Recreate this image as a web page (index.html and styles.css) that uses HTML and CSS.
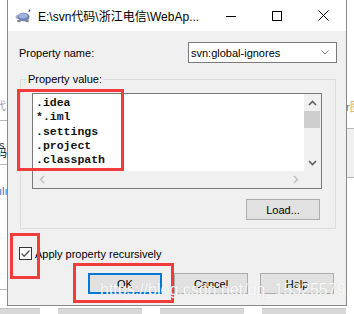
FILE: index.html
```html
<!DOCTYPE html>
<html lang="en">
<head>
    <meta charset="UTF-8">
    <title>Properties</title>
    <link rel="stylesheet" href="styles.css">
</head>
<body>
    <div class="screen">
        <div class="stage">
            <!-- window behind, left edge -->
            <div class="side side-left">
                <div class="gap-100"></div>
                <div class="frag frag-gray">代</div>
                <div class="rule rule-a"></div>
                <div class="frag frag-s">s <span class="orange">f</span></div>
                <div class="frag frag-ma">码</div>
                <div class="rule rule-b"></div>
                <div class="frag frag-blue">ılı</div>
                <div class="rule rule-c"></div>
            </div>

            <div class="dialog">
                <div class="titlebar">
                    <svg class="app-icon" width="17" height="16" viewBox="0 0 17 16">
                        <ellipse cx="4" cy="13" rx="2" ry="1.3" fill="#8c8c8c"/>
                        <ellipse cx="12" cy="13" rx="2" ry="1.3" fill="#8c8c8c"/>
                        <circle cx="2.5" cy="9" r="2" fill="#a9b2c6"/>
                        <ellipse cx="8.5" cy="9" rx="6" ry="4.2" fill="#6d82b8"/>
                        <ellipse cx="8" cy="7.8" rx="4.5" ry="2.6" fill="#9fb1dd"/>
                        <path d="M14 1 L15.5 3 L13.5 4 Z" fill="#1d3f8a"/>
                    </svg>
                    <span class="title">E:\svn代码\浙江电信\WebAp...</span>
                    <div class="controls">
                        <div class="ctl">
                            <svg width="10" height="10" viewBox="0 0 10 10"><path d="M0 5.5 H10" stroke="#000" stroke-width="1"/></svg>
                        </div>
                        <div class="ctl">
                            <svg width="10" height="10" viewBox="0 0 10 10"><rect x="0.5" y="0.5" width="9" height="9" fill="none" stroke="#000" stroke-width="1"/></svg>
                        </div>
                        <div class="ctl">
                            <svg width="11" height="11" viewBox="0 0 11 11"><path d="M0.5 0.5 L10.5 10.5 M10.5 0.5 L0.5 10.5" stroke="#000" stroke-width="1"/></svg>
                        </div>
                    </div>
                </div>

                <div class="name-row">
                    <span>Property name:</span>
                    <div class="combo">
                        <span>svn:global-ignores</span>
                        <svg width="8" height="5" viewBox="0 0 8 5"><path d="M0.5 0.5 L4 4 L7.5 0.5" fill="none" stroke="#7a7a7a" stroke-width="1"/></svg>
                    </div>
                </div>

                <div class="group">
                    <span class="group-label">Property value:</span>
                    <div class="memo">
                        <div class="memo-text">.idea<br>*.iml<br>.settings<br>.project<br>.classpath</div>
                        <div class="vscroll">
                            <div class="arrow">
                                <svg width="9" height="6" viewBox="0 0 9 6"><path d="M1 5 L4.5 1.5 L8 5" fill="none" stroke="#606060" stroke-width="1.6"/></svg>
                            </div>
                            <div class="thumb"></div>
                            <div class="track"></div>
                            <div class="arrow">
                                <svg width="9" height="6" viewBox="0 0 9 6"><path d="M1 1 L4.5 4.5 L8 1" fill="none" stroke="#606060" stroke-width="1.6"/></svg>
                            </div>
                        </div>
                        <div class="hscroll">
                            <div class="arrow">
                                <svg width="6" height="9" viewBox="0 0 6 9"><path d="M5 1 L1.5 4.5 L5 8" fill="none" stroke="#c2c2c2" stroke-width="1.6"/></svg>
                            </div>
                            <div class="arrow">
                                <svg width="6" height="9" viewBox="0 0 6 9"><path d="M1 1 L4.5 4.5 L1 8" fill="none" stroke="#c2c2c2" stroke-width="1.6"/></svg>
                            </div>
                        </div>
                        <div class="corner"></div>
                    </div>
                    <div class="load-row">
                        <button class="btn">Load...</button>
                    </div>
                </div>

                <div class="check-row">
                    <span class="checkbox">
                        <svg width="11" height="11" viewBox="0 0 11 11"><path d="M1.5 5.5 L4.2 8.2 L9.5 2.5" fill="none" stroke="#555" stroke-width="1.3"/></svg>
                    </span>
                    <span>Apply property recursively</span>
                </div>

                <div class="button-row">
                    <button class="btn btn-default">OK</button>
                    <button class="btn">Cancel</button>
                    <button class="btn">Help</button>
                </div>
            </div>

            <!-- window behind, right edge -->
            <div class="side side-right">
                <div class="gap-101"></div>
                <div class="frag frag-r">r<span class="pic">图</span></div>
                <div class="rule rule-d"></div>
                <div class="shade"></div>
                <div class="rule rule-e"></div>
            </div>
        </div>

        <div class="tabs">
            <div class="tab tab-first"></div>
            <div class="tab"></div>
            <div class="tab"></div>
            <div class="tab"></div>
        </div>

        <!-- annotations drawn over the screenshot -->
        <div class="mark mark-text"></div>
        <div class="mark mark-check"></div>
        <div class="mark mark-ok"></div>
        <div class="watermark">https://blog.csdn.net/qq_15325579</div>
    </div>
</body>
</html>
```

FILE: styles.css
```css
body {
    margin: 0;
    background-color: #ffffff;
    font-family: 'Liberation Sans', 'Noto Sans CJK SC', sans-serif;
    font-size: 11px;
    color: #000000;
}
.screen {
    position: relative;
    width: 354px;
    height: 314px;
    overflow: hidden;
}
.stage {
    display: flex;
    height: 306px;
}

/* background windows */
.side {
    display: flex;
    flex-direction: column;
    overflow: hidden;
    white-space: nowrap;
}
.side-left {
    width: 7px;
}
.side-right {
    width: 7px;
}
.gap-100 {
    height: 100px;
    flex-shrink: 0;
}
.gap-101 {
    height: 101px;
    flex-shrink: 0;
}
.frag {
    flex-shrink: 0;
    font-size: 11px;
    line-height: 12px;
    height: 12px;
}
.frag-gray {
    color: #9da3b8;
    margin-left: -5px;
}
.frag-s {
    margin-top: 21px;
    height: 7px;
    line-height: 7px;
    color: #333;
    margin-left: -1px;
}
.orange {
    color: #e07b14;
}
.frag-ma {
    height: 9px;
    line-height: 9px;
    margin-left: -4px;
    color: #111;
}
.frag-blue {
    margin-top: 20px;
    color: #3d6fc4;
    margin-left: -1px;
}
.frag-r {
    color: #4b7fc6;
    margin-left: -1px;
}
.pic {
    color: #c9a66a;
}
.rule {
    flex-shrink: 0;
    height: 1px;
    background-color: #b9b9b9;
}
.rule-a {
    margin-top: 8px;
}
.rule-b {
    margin-top: 6px;
}
.rule-c {
    margin-top: 92px;
}
.rule-d {
    margin-top: 15px;
}
.shade {
    flex-shrink: 0;
    height: 48px;
    background-color: #f0f0f0;
}

/* dialog */
.dialog {
    box-sizing: border-box;
    width: 340px;
    height: 306px;
    border: 1px solid #8a8a8a;
    border-top: none;
    background-color: #f0f0f0;
}
.titlebar {
    display: flex;
    align-items: center;
    height: 31px;
    background-color: #ffffff;
}
.app-icon {
    margin-left: 7px;
}
.title {
    margin-left: 6px;
    font-size: 12px;
}
.controls {
    display: flex;
    margin-left: auto;
}
.ctl {
    display: flex;
    justify-content: center;
    align-items: center;
    width: 46px;
    height: 31px;
}
.name-row {
    display: flex;
    justify-content: space-between;
    align-items: center;
    height: 21px;
    margin: 11px 9px 0 11px;
}
.combo {
    box-sizing: border-box;
    display: flex;
    justify-content: space-between;
    align-items: center;
    width: 149px;
    height: 21px;
    padding: 0 7px 0 2px;
    border: 1px solid #7a7a7a;
    background-color: #ffffff;
}
.group {
    position: relative;
    box-sizing: border-box;
    height: 150px;
    margin: 16px 10px 0 12px;
    padding: 13px 13px 0 11px;
    border: 1px solid #dcdcdc;
}
.group-label {
    position: absolute;
    top: -8px;
    left: 6px;
    padding: 0 1px;
    line-height: 14px;
    background-color: #f0f0f0;
}
.memo {
    box-sizing: border-box;
    display: grid;
    grid-template-columns: 1fr 17px;
    grid-template-rows: 1fr 17px;
    width: 290px;
    height: 96px;
    border: 1px solid #7a7a7a;
    background-color: #ffffff;
}
.memo-text {
    padding: 2px 3px 0 3px;
    font-family: 'Liberation Mono', 'DejaVu Sans Mono', monospace;
    font-size: 11.5px;
    font-weight: bold;
    line-height: 14.3px;
    color: #111111;
    overflow: hidden;
}
.vscroll {
    display: flex;
    flex-direction: column;
    background-color: #f0f0f0;
}
.arrow {
    display: flex;
    justify-content: center;
    align-items: center;
    width: 17px;
    height: 17px;
    flex-shrink: 0;
}
.thumb {
    height: 17px;
    margin-right: 1px;
    background-color: #cdcdcd;
}
.track {
    flex: 1;
}
.hscroll {
    display: flex;
    justify-content: space-between;
    background-color: #f0f0f0;
}
.corner {
    background-color: #f0f0f0;
}
.load-row {
    display: flex;
    justify-content: flex-end;
    margin: 10px 2px 0 0;
}
.btn {
    box-sizing: border-box;
    width: 74px;
    height: 21px;
    padding: 0;
    font-family: 'Liberation Sans', sans-serif;
    font-size: 11px;
    color: #000000;
    border: 1px solid #adadad;
    background-color: #e1e1e1;
}
.btn-default {
    border: 2px solid #0078d7;
}
.check-row {
    display: flex;
    align-items: center;
    gap: 3px;
    height: 13px;
    margin: 18px 0 0 11px;
}
.checkbox {
    box-sizing: border-box;
    display: flex;
    justify-content: center;
    align-items: center;
    width: 13px;
    height: 13px;
    border: 1px solid #333333;
    background-color: #ffffff;
}
.button-row {
    display: flex;
    justify-content: flex-end;
    gap: 12px;
    margin: 13px 12px 0 0;
}

/* taskbar-ish strip under the dialog */
.tabs {
    display: flex;
    gap: 18px;
    padding-top: 2px;
}
.tab {
    width: 84px;
    height: 6px;
    background-color: #d8d8d8;
    border-top: 1px solid #c4c4c4;
}
.tab-first {
    width: 40px;
}

/* red annotation boxes */
.mark {
    position: absolute;
    box-sizing: border-box;
    border: 3px solid #f03c3c;
}
.mark-text {
    left: 17px;
    top: 89px;
    width: 107px;
    height: 82px;
}
.mark-check {
    left: 10px;
    top: 233px;
    width: 30px;
    height: 46px;
}
.mark-ok {
    left: 73px;
    top: 263px;
    width: 101px;
    height: 40px;
}
.watermark {
    position: absolute;
    left: 100px;
    top: 281px;
    font-family: 'Liberation Sans', sans-serif;
    font-size: 16px;
    line-height: 18px;
    color: rgba(255, 255, 255, 0.9);
    text-shadow: 0 0 1px rgba(160, 160, 160, 0.45);
    white-space: nowrap;
}
```
